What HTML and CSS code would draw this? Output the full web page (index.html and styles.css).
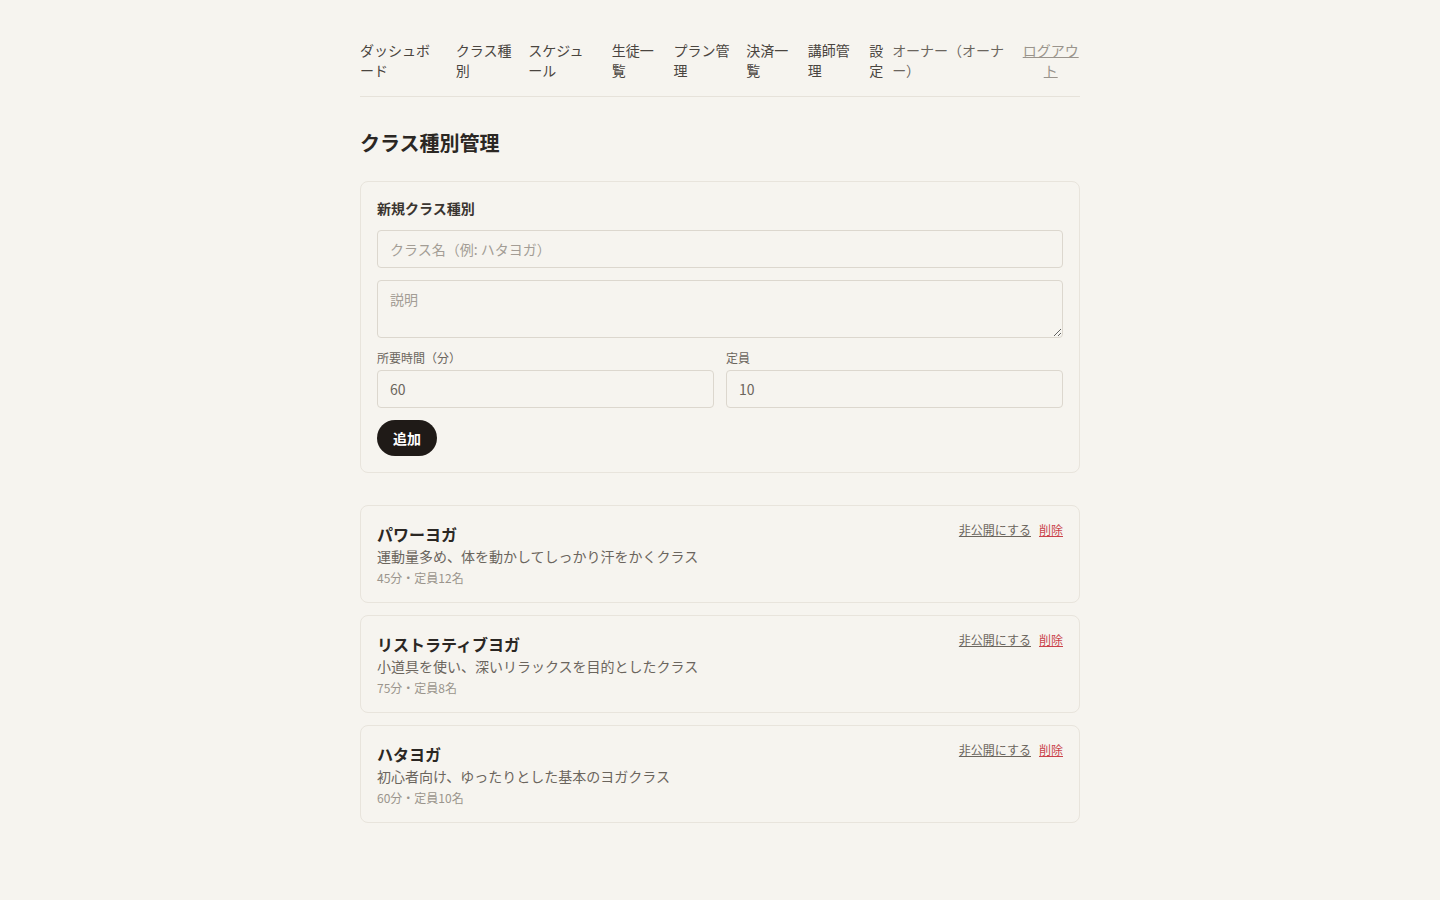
FILE: index.html
```html
<!DOCTYPE html>
<html lang="ja">
<head>
<meta charset="utf-8">
<title>クラス種別管理</title>
<link rel="stylesheet" href="styles.css">
</head>
<body>
<div class="page">
  <header class="header">
    <nav class="nav">
      <a class="nav-link" href="#">ダッシュボード</a>
      <a class="nav-link" href="#">クラス種別</a>
      <a class="nav-link" href="#">スケジュール</a>
      <a class="nav-link" href="#">生徒一覧</a>
      <a class="nav-link" href="#">プラン管理</a>
      <a class="nav-link" href="#">決済一覧</a>
      <a class="nav-link" href="#">講師管理</a>
      <a class="nav-link" href="#">設定</a>
    </nav>
    <div class="user">
      <span class="user-name">オーナー（オーナー）</span>
      <button class="logout" type="button">ログアウト</button>
    </div>
  </header>

  <main class="main">
    <h1 class="title">クラス種別管理</h1>

    <section class="card form-card">
      <h2 class="form-title">新規クラス種別</h2>
      <input class="field" type="text" placeholder="クラス名（例: ハタヨガ）">
      <textarea class="field area" placeholder="説明"></textarea>
      <div class="row">
        <label class="col">
          <span class="label">所要時間（分）</span>
          <input class="field" type="number" value="60">
        </label>
        <label class="col">
          <span class="label">定員</span>
          <input class="field" type="number" value="10">
        </label>
      </div>
      <button class="btn" type="button">追加</button>
    </section>

    <ul class="list">
      <li class="card item">
        <div class="item-body">
          <div class="item-name">パワーヨガ</div>
          <div class="item-desc">運動量多め、体を動かしてしっかり汗をかくクラス</div>
          <div class="item-meta">45分・定員12名</div>
        </div>
        <div class="actions">
          <a class="act" href="#">非公開にする</a>
          <a class="act danger" href="#">削除</a>
        </div>
      </li>
      <li class="card item">
        <div class="item-body">
          <div class="item-name">リストラティブヨガ</div>
          <div class="item-desc">小道具を使い、深いリラックスを目的としたクラス</div>
          <div class="item-meta">75分・定員8名</div>
        </div>
        <div class="actions">
          <a class="act" href="#">非公開にする</a>
          <a class="act danger" href="#">削除</a>
        </div>
      </li>
      <li class="card item">
        <div class="item-body">
          <div class="item-name">ハタヨガ</div>
          <div class="item-desc">初心者向け、ゆったりとした基本のヨガクラス</div>
          <div class="item-meta">60分・定員10名</div>
        </div>
        <div class="actions">
          <a class="act" href="#">非公開にする</a>
          <a class="act danger" href="#">削除</a>
        </div>
      </li>
    </ul>
  </main>
</div>
</body>
</html>
```

FILE: styles.css
```css
* { box-sizing: border-box; }
html, body { margin: 0; padding: 0; }
body {
  background: #f6f4ef;
  color: #2b2723;
  font-family: "Noto Sans CJK JP", "Noto Sans", sans-serif;
  font-size: 14px;
  line-height: 20px;
}
.page {
  width: 720px;
  margin: 0 auto;
  padding: 40px 0 40px;
}
.header {
  display: flex;
  justify-content: space-between;
  padding-bottom: 16px;
  border-bottom: 1px solid #e6e2da;
}
.nav {
  display: flex;
  gap: 16px;
}
.nav-link {
  color: #4a453f;
  text-decoration: none;
}
.user {
  display: flex;
  gap: 12px;
  align-items: flex-start;
}
.user-name { color: #6b655d; }
.logout {
  background: none;
  border: 0;
  padding: 0;
  font: inherit;
  color: #9a948c;
  text-decoration: underline;
  cursor: pointer;
}
.main { padding-top: 32px; }
.title {
  margin: 0 0 24px;
  font-size: 20px;
  line-height: 28px;
  font-weight: 700;
}
.card {
  border: 1px solid #e8e4dc;
  border-radius: 8px;
  background: #f6f4ef;
}
.form-card {
  padding: 16px;
  display: flex;
  flex-direction: column;
  gap: 12px;
  align-items: flex-start;
}
.form-title {
  margin: 0;
  font-size: 14px;
  line-height: 20px;
  font-weight: 600;
  color: #3a3530;
}
.field {
  width: 100%;
  height: 38px;
  border: 1px solid #dcd7ce;
  border-radius: 4px;
  background: #f6f4ef;
  padding: 0 12px;
  font: inherit;
  color: #6b655d;
  outline: none;
}
.field::placeholder { color: #a39d95; }
.area {
  height: 58px;
  padding: 8px 12px;
  resize: vertical;
}
.row {
  width: 100%;
  display: grid;
  grid-template-columns: 1fr 1fr;
  gap: 12px;
}
.col {
  display: flex;
  flex-direction: column;
  gap: 4px;
}
.label {
  font-size: 12px;
  line-height: 16px;
  color: #6b655d;
}
.btn {
  height: 36px;
  padding: 0 16px;
  border: 0;
  border-radius: 18px;
  background: #1f1a17;
  color: #fff;
  font: inherit;
  font-weight: 600;
  cursor: pointer;
}
.list {
  list-style: none;
  margin: 32px 0 0;
  padding: 0;
  display: flex;
  flex-direction: column;
  gap: 12px;
}
.item {
  padding: 16px;
  display: flex;
  justify-content: space-between;
  align-items: flex-start;
}
.item-name {
  font-size: 16px;
  line-height: 24px;
  font-weight: 600;
  color: #2b2723;
}
.item-desc { color: #6b655d; }
.item-meta {
  margin-top: 4px;
  font-size: 12px;
  line-height: 16px;
  color: #9a948c;
}
.actions {
  display: flex;
  gap: 8px;
  font-size: 12px;
  line-height: 16px;
}
.act {
  color: #6b655d;
  text-decoration: underline;
}
.danger { color: #c9424a; }
```
